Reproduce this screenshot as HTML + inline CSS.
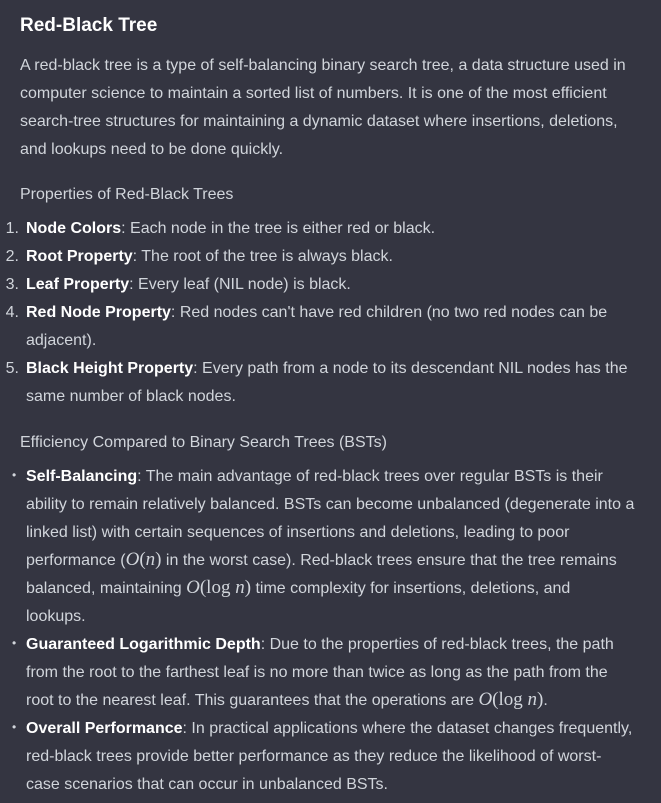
<!DOCTYPE html>
<html><head><style>
html,body{margin:0;padding:0;background:#343541;width:661px;height:803px;overflow:hidden}
body{font-family:"Liberation Sans",sans-serif;color:#d1d5db;font-size:16px;line-height:28px}
h1{position:absolute;left:20px;top:12px;margin:0;font-size:19px;line-height:28px;color:#fff;font-weight:bold}
.p{position:absolute;left:20px}
.li{position:absolute;left:26px}
.n{position:absolute;left:0;width:19px;text-align:right}
.b{position:absolute;left:12px;font-size:12px}
b{color:#fff}
.m{font-family:"Liberation Serif",serif;font-size:19px;line-height:20px}
.m i{font-style:italic}
</style></head><body>
<h1>Red-Black Tree</h1>
<div class="p" style="top:52px;white-space:nowrap">A red-black tree is a type of self-balancing binary search tree, a data structure used in<br>computer science to maintain a sorted list of numbers. It is one of the most efficient<br>search-tree structures for maintaining a dynamic dataset where insertions, deletions,<br>and lookups need to be done quickly.</div>
<div class="p" style="top:181px">Properties of Red-Black Trees</div>

<div class="n" style="top:215px">1.</div><div class="li" style="top:215px"><b>Node Colors</b>: Each node in the tree is either red or black.</div>
<div class="n" style="top:243px">2.</div><div class="li" style="top:243px"><b>Root Property</b>: The root of the tree is always black.</div>
<div class="n" style="top:271px">3.</div><div class="li" style="top:271px"><b>Leaf Property</b>: Every leaf (NIL node) is black.</div>
<div class="n" style="top:299px">4.</div><div class="li" style="top:299px;white-space:nowrap"><b>Red Node Property</b>: Red nodes can't have red children (no two red nodes can be<br>adjacent).</div>
<div class="n" style="top:355px">5.</div><div class="li" style="top:355px;white-space:nowrap"><b>Black Height Property</b>: Every path from a node to its descendant NIL nodes has the<br>same number of black nodes.</div>

<div class="p" style="top:429px">Efficiency Compared to Binary Search Trees (BSTs)</div>

<div class="b" style="top:461px">•</div><div class="li" style="top:463px;white-space:nowrap"><b>Self-Balancing</b>: The main advantage of red-black trees over regular BSTs is their<br>ability to remain relatively balanced. BSTs can become unbalanced (degenerate into a<br>linked list) with certain sequences of insertions and deletions, leading to poor<br>performance (<span class="m"><i>O</i>(<i>n</i>)</span> in the worst case). Red-black trees ensure that the tree remains<br>balanced, maintaining <span class="m"><i>O</i>(log <i>n</i>)</span> time complexity for insertions, deletions, and<br>lookups.</div>
<div class="b" style="top:629px">•</div><div class="li" style="top:631px;white-space:nowrap"><b>Guaranteed Logarithmic Depth</b>: Due to the properties of red-black trees, the path<br>from the root to the farthest leaf is no more than twice as long as the path from the<br>root to the nearest leaf. This guarantees that the operations are <span class="m"><i>O</i>(log <i>n</i>)</span>.</div>
<div class="b" style="top:713px">•</div><div class="li" style="top:715px;white-space:nowrap"><b>Overall Performance</b>: In practical applications where the dataset changes frequently,<br>red-black trees provide better performance as they reduce the likelihood of worst-<br>case scenarios that can occur in unbalanced BSTs.</div>
</body></html>
